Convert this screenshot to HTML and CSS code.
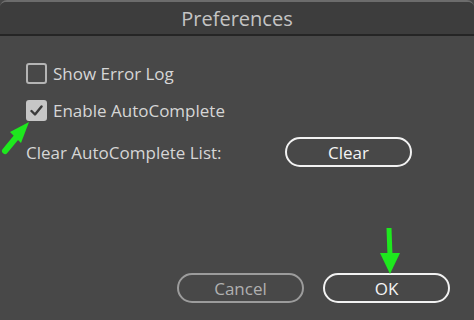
FILE: index.html
```html
<!DOCTYPE html>
<html>
<head>
  <link rel="stylesheet" href="styles.css">
</head>
<body>

  <div class="dialog">
    <!-- Window title -->
    <div class="titlebar">Preferences</div>

    <!-- Options -->
    <div class="content">
      <label class="option">
        <span class="checkbox"></span>
        <span>Show Error Log</span>
      </label>
      <label class="option">
        <span class="checkbox checked">
          <svg width="13" height="11" viewBox="0 0 13 11"><path d="M1.5 6 L5 9.5 L11.5 1.5" fill="none" stroke="#3a3a3a" stroke-width="2.4" stroke-linecap="round" stroke-linejoin="round"/></svg>
        </span>
        <span>Enable AutoComplete</span>
      </label>
      <div class="clear-row">
        <span class="clear-label">Clear AutoComplete List:</span>
        <button class="pill bright">Clear</button>
      </div>
    </div>

    <!-- Dialog buttons -->
    <div class="footer">
      <button class="pill dim">Cancel</button>
      <button class="pill bright">OK</button>
    </div>

    <!-- Green annotation arrows -->
    <svg class="arrow arrow-check" width="40" height="42" viewBox="0 0 40 42">
      <line x1="4" y1="38" x2="18" y2="21" stroke="#1ee81e" stroke-width="6" stroke-linecap="round"/>
      <polygon points="28,9 9,19 20,30" fill="#1ee81e"/>
    </svg>
    <svg class="arrow arrow-ok" width="24" height="50" viewBox="0 0 24 50">
      <line x1="10" y1="2" x2="11" y2="30" stroke="#1ee81e" stroke-width="5"/>
      <polygon points="1,27 21,27 11,48" fill="#1ee81e"/>
    </svg>
  </div>

</body>
</html>
```

FILE: styles.css
```css
/* Whole window */
body {
  margin: 0;
  background: #474747;
  font-family: "Open Sans", "Liberation Sans", sans-serif;
}

.dialog {
  position: relative;
  height: 320px;
  box-sizing: border-box;
  background: #484848;
  border-top: 2px solid #6c6c6c;
  border-radius: 7px 7px 0 0;
  display: flex;
  flex-direction: column;
  overflow: hidden;
}

/* Title bar */
.titlebar {
  height: 32px;
  line-height: 34px;
  text-align: center;
  background: #3d3d3d;
  border-bottom: 2px solid #252525;
  color: #c4c4c4;
  font-size: 20px;
}

/* Option rows */
.content {
  padding: 27px 0 0 26px;
  display: flex;
  flex-direction: column;
}

.option {
  display: flex;
  align-items: center;
  gap: 6px;
  height: 21px;
  margin-bottom: 16px;
  color: #d6d6d6;
  font-size: 17px;
}

.checkbox {
  width: 21px;
  height: 21px;
  box-sizing: border-box;
  border: 2px solid #b4b4b4;
  border-radius: 3px;
  display: flex;
  align-items: center;
  justify-content: center;
}

.checkbox.checked {
  background: #c6c6c6;
  border-color: #c6c6c6;
}

.clear-row {
  display: flex;
  align-items: center;
  height: 30px;
}

.clear-label {
  width: 259px;
  color: #d6d6d6;
  font-size: 17px;
}

/* Rounded buttons */
.pill {
  width: 127px;
  height: 30px;
  border-radius: 15px;
  background: transparent;
  font-family: inherit;
  font-size: 17px;
  padding: 0;
}

.pill.bright {
  border: 2px solid #f2f2f2;
  color: #f4f4f4;
}

.pill.dim {
  border: 2px solid #9c9c9c;
  color: #b0b0b0;
}

.footer {
  margin-top: auto;
  display: flex;
  justify-content: flex-end;
  gap: 19px;
  padding: 0 24px 17px 0;
}

/* Annotation arrows laid over the dialog */
.arrow {
  position: absolute;
}

.arrow-check {
  left: 1px;
  top: 111px;
}

.arrow-ok {
  left: 379px;
  top: 224px;
}
```
